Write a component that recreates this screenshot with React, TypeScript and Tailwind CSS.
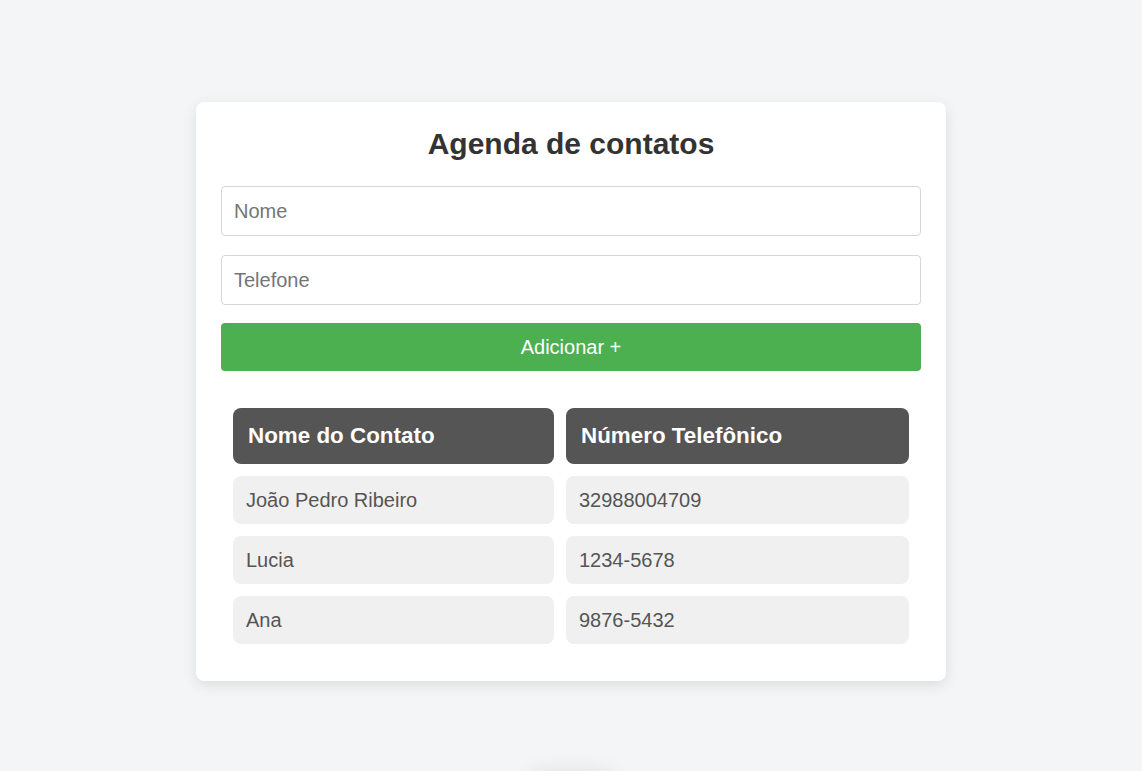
import { useState } from 'react'

interface Contato {
  nome: string
  telefone: string
}

export default function App() {
  const [contatos, setContatos] = useState<Contato[]>([
    { nome: 'João Pedro Ribeiro', telefone: '32988004709' },
    { nome: 'Lucia', telefone: '1234-5678' },
    { nome: 'Ana', telefone: '9876-5432' },
  ])
  const [nome, setNome] = useState('')
  const [telefone, setTelefone] = useState('')

  const adicionar = () => {
    if (!nome || !telefone) return
    setContatos([...contatos, { nome, telefone }])
    setNome('')
    setTelefone('')
  }

  return (
    <div
      className="h-screen bg-[#f4f5f7] flex flex-col items-center overflow-hidden"
      style={{ fontFamily: '"Liberation Sans", Arial, sans-serif' }}
    >
      <div className="mt-[102px] shrink-0 w-[750px] bg-white rounded-[8px] shadow-[0_4px_14px_rgba(0,0,0,0.1)] p-[25px]">
        <h1 className="text-[30px] leading-[34px] font-bold text-[#333] text-center mb-[25px]">
          Agenda de contatos
        </h1>

        <input
          value={nome}
          onChange={(e) => setNome(e.target.value)}
          placeholder="Nome"
          className="block w-full h-[50px] px-[12px] border border-[#d6d6d6] rounded-[4px] text-[20px] text-[#333] placeholder:text-[#757575] outline-none mb-[19px]"
        />
        <input
          value={telefone}
          onChange={(e) => setTelefone(e.target.value)}
          placeholder="Telefone"
          className="block w-full h-[50px] px-[12px] border border-[#d6d6d6] rounded-[4px] text-[20px] text-[#333] placeholder:text-[#757575] outline-none mb-[18px]"
        />
        <button
          onClick={adicionar}
          className="block w-full h-[48px] bg-[#4caf50] text-white text-[20px] rounded-[4px] cursor-pointer"
        >
          Adicionar +
        </button>

        <div className="grid grid-cols-[321px_343px] gap-3 px-3 pt-[37px] pb-3">
          <div className="h-[56px] bg-[#555] rounded-[8px] flex items-center px-[15px] text-white text-[22.4px] font-bold">
            Nome do Contato
          </div>
          <div className="h-[56px] bg-[#555] rounded-[8px] flex items-center px-[15px] text-white text-[22.4px] font-bold">
            Número Telefônico
          </div>
          {contatos.map((c, i) => (
            <div key={i} className="contents">
              <div className="h-[48px] bg-[#f0f0f0] rounded-[8px] flex items-center px-[13px] text-[20px] text-[#555]">
                {c.nome}
              </div>
              <div className="h-[48px] bg-[#f0f0f0] rounded-[8px] flex items-center px-[13px] text-[20px] text-[#555]">
                {c.telefone}
              </div>
            </div>
          ))}
        </div>
      </div>

      <div className="mt-[94px] w-[80px] h-[40px] shrink-0 bg-white rounded-[8px] shadow-[0_0_24px_rgba(0,0,0,0.12)]"></div>
    </div>
  )
}
